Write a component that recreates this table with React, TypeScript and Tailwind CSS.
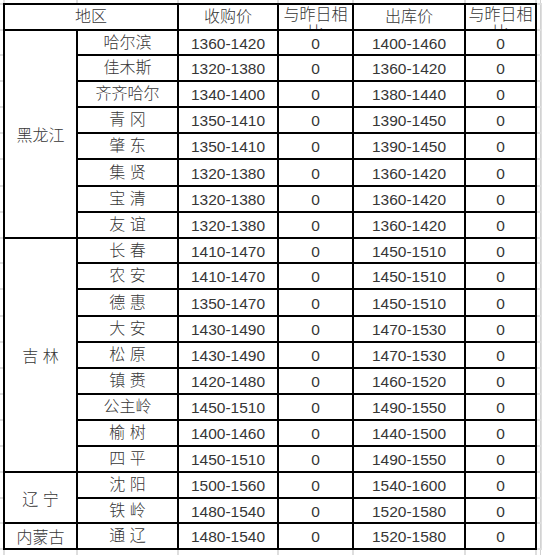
import React from 'react';

type Row = { name: string; buy: string; sell: string };
type Group = { region: string; rows: Row[] };

const groups: Group[] = [
  {
    region: '黑龙江',
    rows: [
      { name: '哈尔滨', buy: '1360-1420', sell: '1400-1460' },
      { name: '佳木斯', buy: '1320-1380', sell: '1360-1420' },
      { name: '齐齐哈尔', buy: '1340-1400', sell: '1380-1440' },
      { name: '青 冈', buy: '1350-1410', sell: '1390-1450' },
      { name: '肇 东', buy: '1350-1410', sell: '1390-1450' },
      { name: '集 贤', buy: '1320-1380', sell: '1360-1420' },
      { name: '宝 清', buy: '1320-1380', sell: '1360-1420' },
      { name: '友 谊', buy: '1320-1380', sell: '1360-1420' },
    ],
  },
  {
    region: '吉 林',
    rows: [
      { name: '长 春', buy: '1410-1470', sell: '1450-1510' },
      { name: '农 安', buy: '1410-1470', sell: '1450-1510' },
      { name: '德 惠', buy: '1350-1470', sell: '1450-1510' },
      { name: '大 安', buy: '1430-1490', sell: '1470-1530' },
      { name: '松 原', buy: '1430-1490', sell: '1470-1530' },
      { name: '镇 赉', buy: '1420-1480', sell: '1460-1520' },
      { name: '公主岭', buy: '1450-1510', sell: '1490-1550' },
      { name: '榆 树', buy: '1400-1460', sell: '1440-1500' },
      { name: '四 平', buy: '1450-1510', sell: '1490-1550' },
    ],
  },
  {
    region: '辽 宁',
    rows: [
      { name: '沈 阳', buy: '1500-1560', sell: '1540-1600' },
      { name: '铁 岭', buy: '1480-1540', sell: '1520-1580' },
    ],
  },
  {
    region: '内蒙古',
    rows: [{ name: '通 辽', buy: '1480-1540', sell: '1520-1580' }],
  },
];

const spans: Record<number, string> = {
  1: 'row-span-1',
  2: 'row-span-2',
  8: 'row-span-8',
  9: 'row-span-9',
};

// shared sheet geometry
const COLS = 'grid-cols-[71px_99px_98px_73px_110px_69px]';
const ROWS =
  'grid-rows-[24px_23px_24px_24px_24px_24px_25px_24px_24px_23px_24px_25px_24px_24px_24px_24px_24px_24px_24px_23px_24px]';

const cell = 'bg-white flex items-center justify-center';

function HStrip({ h }: { h: string }) {
  return (
    <div className={`flex ${h}`}>
      <div className="w-[3px]" />
      <div className={`grid ${COLS} gap-x-[2px] px-[2px] bg-[#dedede] w-[534px]`}>
        {Array.from({ length: 6 }).map((_, i) => (
          <div key={i} className="bg-white" />
        ))}
      </div>
      <div className="w-[4px] border-r border-[#d2d2d2]" />
    </div>
  );
}

function VStrip({ right }: { right?: boolean }) {
  return (
    <div className={`grid ${ROWS} gap-y-[2px] py-[2px] bg-[#dedede] ${right ? 'w-[5px] grid-cols-[4px]' : 'w-[3px]'}`}>
      {Array.from({ length: 21 }).map((_, i) => (
        <div key={i} className={`bg-white ${right ? 'border-r border-[#d2d2d2]' : ''}`} />
      ))}
    </div>
  );
}

export default function App() {
  return (
    <div
      className="flex flex-col w-[542px] h-[555px] bg-white text-[#363636] font-light overflow-hidden"
      style={{ fontFamily: '"Liberation Sans", "Noto Sans CJK SC", sans-serif' }}
    >
      <HStrip h="h-[3px]" />
      <div className="flex">
        <VStrip />
        <div className={`grid ${COLS} ${ROWS} gap-[2px] p-[2px] bg-black w-[534px]`}>
          {/* header */}
          <div className={`${cell} col-span-2 text-[16px]`}>地区</div>
          <div className={`${cell} text-[16px]`}>收购价</div>
          <div className="bg-white overflow-hidden text-center text-[16px] leading-[18px] pt-[1px]">与昨日相比</div>
          <div className={`${cell} text-[16px]`}>出库价</div>
          <div className="bg-white overflow-hidden text-center text-[16px] leading-[18px] pt-[1px]">与昨日相比</div>

          {groups.map((g) =>
            g.rows.map((r, i) => (
              <React.Fragment key={g.region + r.name}>
                {i === 0 && (
                  <div className={`${cell} ${spans[g.rows.length]} text-[16px] pt-[4px]`}>{g.region}</div>
                )}
                <div className={`${cell} text-[16px]`}>{r.name}</div>
                <div className={`${cell} text-[15.5px] pt-[2px]`}>{r.buy}</div>
                <div className={`${cell} text-[15.5px] pt-[2px]`}>0</div>
                <div className={`${cell} text-[15.5px] pt-[2px]`}>{r.sell}</div>
                <div className={`${cell} text-[15.5px] pt-[2px]`}>0</div>
              </React.Fragment>
            ))
          )}
        </div>
        <VStrip right />
      </div>
      <HStrip h="h-[5px]" />
    </div>
  );
}
